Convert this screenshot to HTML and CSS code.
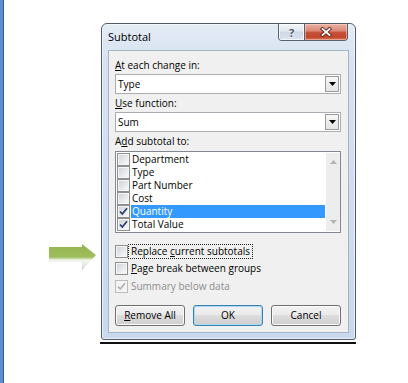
FILE: index.html
```html
<!DOCTYPE html>
<html>
<head>
<meta charset="utf-8">
<link rel="stylesheet" href="styles.css">
</head>
<body>
<div class="stripe"></div>
<div class="canvas">
  <div class="shot">
    <svg class="arrow" width="48" height="30" viewBox="0 0 48 30">
      <defs>
        <linearGradient id="ag" x1="0" y1="0" x2="0" y2="1">
          <stop offset="0" stop-color="#93b550"/>
          <stop offset="0.5" stop-color="#9ebe5d"/>
          <stop offset="0.62" stop-color="#f3f6ee"/>
          <stop offset="0.85" stop-color="#e6e7e4"/>
          <stop offset="1" stop-color="#bfc1bc"/>
        </linearGradient>
      </defs>
      <polygon points="0,5 33,5 33,2 47,13 33,28 33,20 0,20" fill="url(#ag)"/>
    </svg>
    <div class="window">
      <div class="titlebar">
        <span class="title">Subtotal</span>
        <div class="caption-btns">
          <div class="cb help">?</div>
          <div class="cb close">
            <svg width="14" height="10" viewBox="0 0 14 10">
              <path d="M3.5 2 L10.5 8 M10.5 2 L3.5 8" stroke="#5c2216" stroke-width="3.6" stroke-linecap="square"/>
              <path d="M3.5 2 L10.5 8 M10.5 2 L3.5 8" stroke="#ffffff" stroke-width="1.8" stroke-linecap="square"/>
            </svg>
          </div>
        </div>
      </div>
      <div class="client">
        <div class="label"><u>A</u>t each change in:</div>
        <div class="combo">
          <span class="combo-text">Type</span>
          <span class="dd"><svg width="7" height="4" viewBox="0 0 7 4"><polygon points="0,0 7,0 3.5,4" fill="#000"/></svg></span>
        </div>
        <div class="label after-combo"><u>U</u>se function:</div>
        <div class="combo">
          <span class="combo-text">Sum</span>
          <span class="dd"><svg width="7" height="4" viewBox="0 0 7 4"><polygon points="0,0 7,0 3.5,4" fill="#000"/></svg></span>
        </div>
        <div class="label after-combo">A<u>d</u>d subtotal to:</div>
        <div class="list">
          <div class="rows">
            <div class="row"><span class="chk"></span><span class="item">Department</span></div>
            <div class="row"><span class="chk"></span><span class="item">Type</span></div>
            <div class="row"><span class="chk"></span><span class="item">Part Number</span></div>
            <div class="row"><span class="chk"></span><span class="item">Cost</span></div>
            <div class="row"><span class="chk"><svg class="tick" width="11" height="11" viewBox="0 0 11 11"><path d="M2 5.5 L4.3 8 L9 2.2" fill="none" stroke="#233a63" stroke-width="1.6"/></svg></span><span class="item sel">Quantity</span></div>
            <div class="row"><span class="chk"><svg class="tick" width="11" height="11" viewBox="0 0 11 11"><path d="M2 5.5 L4.3 8 L9 2.2" fill="none" stroke="#233a63" stroke-width="1.6"/></svg></span><span class="item">Total Value</span></div>
          </div>
          <div class="vscroll">
            <svg width="7" height="4" viewBox="0 0 7 4"><polygon points="0,4 7,4 3.5,0" fill="#b4b4b4"/></svg>
            <svg width="7" height="4" viewBox="0 0 7 4"><polygon points="0,0 7,0 3.5,4" fill="#b4b4b4"/></svg>
          </div>
        </div>
        <div class="opt opt-replace"><span class="chk"></span><span class="opt-label focus">Replace <u>c</u>urrent subtotals</span></div>
        <div class="opt opt-page"><span class="chk"></span><span class="opt-label"><u>P</u>age break between groups</span></div>
        <div class="opt opt-summary disabled"><span class="chk"><svg class="tick" width="11" height="11" viewBox="0 0 11 11"><path d="M2 5.5 L4.3 8 L9 2.2" fill="none" stroke="#a9a9a9" stroke-width="1.4"/></svg></span><span class="opt-label">Summary below data</span></div>
        <div class="buttons">
          <div class="btn"><span><u>R</u>emove All</span></div>
          <div class="btn default"><span>OK</span></div>
          <div class="btn"><span>Cancel</span></div>
        </div>
      </div>
    </div>
    <div class="rule"></div>
  </div>
</div>
</body>
</html>
```
FILE: styles.css
```css
html, body {
  margin: 0;
  padding: 0;
  background: #ffffff;
}
body {
  display: flex;
  height: 383px;
  overflow: hidden;
  font-family: "Open Sans", "Noto Sans", sans-serif;
  font-size: 10px;
  color: #000;
}
.stripe {
  flex: none;
  width: 3px;
  background: #5f8dcb;
  border-right: 1px solid #36609b;
}
.canvas {
  flex: 1;
  padding: 23px 0 0 96px;
}
.shot {
  position: relative;
  width: 256px;
}
.arrow {
  position: absolute;
  left: -51px;
  top: 219px;
}
.window {
  margin-left: 1px;
  width: 255px;
  height: 317px;
  box-sizing: border-box;
  border: 1px solid #515b67;
  border-radius: 6px 6px 3px 3px;
  background: linear-gradient(#e4ecf6, #d6e2f1 12%, #c8d9ed);
  box-shadow: inset 0 0 0 1px rgba(255,255,255,0.6);
  padding: 0 6px 6px;
  display: flex;
  flex-direction: column;
}
.titlebar {
  flex: none;
  height: 26px;
  display: flex;
  align-items: center;
  justify-content: space-between;
}
.title {
  font-size: 11px;
  line-height: 14px;
  color: #000;
}
.caption-btns {
  align-self: flex-start;
  display: flex;
  height: 16px;
  border: 1px solid #58616d;
  border-top: none;
  border-radius: 0 0 4px 4px;
  overflow: hidden;
  margin-right: 1px;
}
.cb {
  height: 16px;
  display: flex;
  align-items: center;
  justify-content: center;
}
.help {
  width: 25px;
  background: linear-gradient(#f3f6fa, #e1e8f1 45%, #cfd9e6 50%, #dbe3ee);
  color: #44556e;
  font-weight: bold;
  font-size: 11px;
  text-shadow: 0 1px 0 #fff;
  box-shadow: inset 0 0 0 1px rgba(255,255,255,0.7);
}
.close {
  width: 42px;
  border-left: 1px solid #58616d;
  background: linear-gradient(#eab2a3, #d98672 45%, #c7543d 50%, #c2452c 80%, #d4715a);
  box-shadow: inset 0 0 0 1px rgba(255,220,210,0.5);
}
.client {
  flex: 1;
  background: #f0f0f0;
  border: 1px solid #a5b3c5;
  padding: 8px 7px 6px 6px;
  display: flex;
  flex-direction: column;
}
.label {
  height: 13px;
  line-height: 13px;
  white-space: nowrap;
}
.after-combo {
  margin-top: 3px;
}
.combo {
  margin-top: 2px;
  height: 20px;
  box-sizing: border-box;
  border: 1px solid #abadb3;
  background: #fff;
  display: flex;
  align-items: center;
  padding-left: 2px;
}
.combo-text {
  flex: 1;
}
.dd {
  width: 14px;
  height: 16px;
  margin-right: 1px;
  box-sizing: border-box;
  border: 1px solid #9a9a9a;
  background: linear-gradient(#f7f7f7, #e4e4e4);
  display: flex;
  align-items: center;
  justify-content: center;
}
.list {
  margin-top: 3px;
  height: 82px;
  box-sizing: border-box;
  border: 1px solid #828790;
  background: #fff;
  display: flex;
  padding: 1px 0 1px 1px;
}
.rows {
  flex: 1;
}
.row {
  height: 13px;
  display: flex;
  align-items: center;
}
.chk {
  flex: none;
  width: 13px;
  height: 13px;
  box-sizing: border-box;
  border: 1px solid #8e8f8f;
  background: linear-gradient(135deg, #cbcfd4 0%, #e7e9ec 55%, #fbfbfb 100%);
  box-shadow: inset 0 0 0 1px #f5f5f5;
  display: flex;
  align-items: center;
  justify-content: center;
}
.item {
  flex: 1;
  height: 13px;
  line-height: 13px;
  margin-left: 1px;
  padding-left: 1px;
  white-space: nowrap;
}
.item.sel {
  background: #3399ff;
  color: #fff;
}
.vscroll {
  flex: none;
  width: 14px;
  margin-left: 1px;
  background: #ededed;
  display: flex;
  flex-direction: column;
  justify-content: space-between;
  align-items: center;
  padding: 7px 0;
  box-sizing: border-box;
}
.opt {
  height: 16px;
  display: flex;
  align-items: center;
}
.opt-replace {
  margin-top: 10px;
}
.opt-page {
  margin-top: 1px;
}
.opt-summary {
  margin-top: 2px;
}
.opt-label {
  border: 1px dotted transparent;
  padding: 0 2px;
  line-height: 13px;
  white-space: nowrap;
}
.opt-label.focus {
  border-color: #222;
}
.disabled .opt-label {
  color: #8d8d8d;
}
.disabled .chk {
  border-color: #bcbcbc;
  background: #f4f4f4;
}
.buttons {
  margin-top: 11px;
  display: flex;
  justify-content: space-between;
}
.btn {
  width: 70px;
  height: 21px;
  box-sizing: border-box;
  border: 1px solid #707070;
  border-radius: 3px;
  background: linear-gradient(#f2f2f2, #ebebeb 45%, #dddddd 50%, #cfcfcf);
  box-shadow: inset 0 0 0 1px #fbfbfb;
  display: flex;
  align-items: center;
  justify-content: center;
  line-height: 13px;
}
.btn.default {
  border-color: #3c7fb1;
  box-shadow: inset 0 0 0 1px #a6dbf6;
}
.rule {
  margin-top: 2px;
  height: 2px;
  width: 256px;
  background: #111;
}
```
